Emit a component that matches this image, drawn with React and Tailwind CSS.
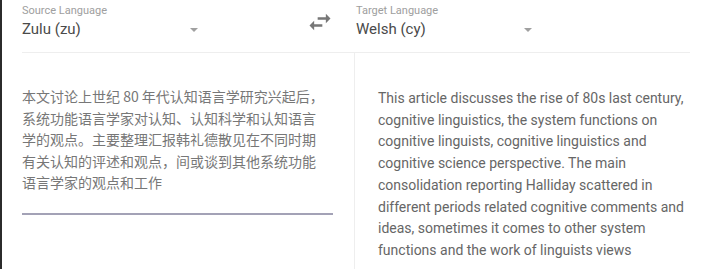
import { useState } from 'react';

const zhLines = [
  '本文讨论上世纪 80 年代认知语言学研究兴起后，',
  '系统功能语言学家对认知、认知科学和认知语言',
  '学的观点。主要整理汇报韩礼德散见在不同时期',
  '有关认知的评述和观点，间或谈到其他系统功能',
  '语言学家的观点和工作',
];

const enLines = [
  'This article discusses the rise of 80s last century,',
  'cognitive linguistics, the system functions on',
  'cognitive linguists, cognitive linguistics and',
  'cognitive science perspective. The main',
  'consolidation reporting Halliday scattered in',
  'different periods related cognitive comments and',
  'ideas, sometimes it comes to other system',
  'functions and the work of linguists views',
];

function Caret() {
  return <span className="block w-0 h-0 border-l-[4px] border-r-[4px] border-t-[4px] border-l-transparent border-r-transparent border-t-[#a0a0a0]" />;
}

function LangSelect({ label, value }) {
  return (
    <div className="w-[180px] flex items-end justify-between pt-[4px]">
      <div>
        <div className="text-[11px] leading-[13px] text-[#9e9e9e]">{label}</div>
        <div className="text-[15px] leading-[20px] mt-[2px] text-[#4a4a4a]">{value}</div>
      </div>
      <div className="mb-[7px] mr-[4px]">
        <Caret />
      </div>
    </div>
  );
}

function SwapIcon() {
  return (
    <svg width="28" height="28" viewBox="0 0 24 24" fill="#777777">
      <path d="M6.99 11L3 15l3.99 4v-3H14v-2H6.99v-3zM21 9l-3.99-4v3H10v2h7.01v3L21 9z" />
    </svg>
  );
}

export default function App() {
  const [source] = useState('Zulu (zu)');
  const [target] = useState('Welsh (cy)');

  return (
    <div className="w-[701px] h-[269px] bg-white flex overflow-hidden" style={{ fontFamily: 'Roboto, "Noto Sans CJK SC", sans-serif' }}>
      <div className="w-[2px] bg-[#2b2b2b] shrink-0" />
      <div className="flex-1 flex flex-col">
        {/* Header */}
        <div className="ml-[20px] mr-[11px] h-[53px] shrink-0 flex items-start border-b border-[#eeeeee]">
          <LangSelect label="Source Language" value={source} />
          <div className="ml-[104px] mt-[8px]">
            <SwapIcon />
          </div>
          <div className="ml-[22px]">
            <LangSelect label="Target Language" value={target} />
          </div>
        </div>

        {/* Body */}
        <div className="flex flex-1">
          <div className="w-[352px] shrink-0 pl-[20px] pr-[20px] pt-[33px]">
            <div className="text-[14px] leading-[21.5px] text-[#777777] whitespace-nowrap" style={{ fontFamily: '"Noto Sans CJK SC", Roboto, sans-serif' }}>
              {zhLines.map((l, i) => (
                <div key={i}>{l}</div>
              ))}
            </div>
            <div className="mt-[19px] h-[2px] w-[311px] bg-[#a3a2b6]" />
          </div>
          <div className="flex-1 border-l border-[#eeeeee] pl-[23px] pt-[35px]">
            <div className="text-[14px] leading-[21.7px] text-[#666666] whitespace-nowrap">
              {enLines.map((l, i) => (
                <div key={i}>{l}</div>
              ))}
            </div>
          </div>
        </div>
      </div>
    </div>
  );
}
